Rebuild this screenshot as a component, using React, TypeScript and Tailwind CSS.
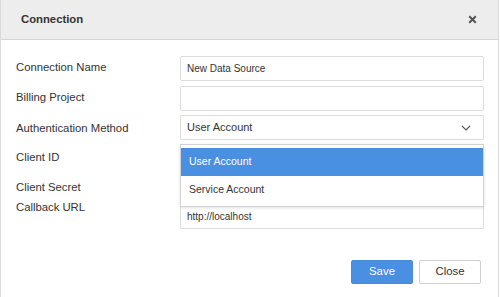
import React from "react";

function Field({ value }: { value?: string }) {
  return (
    <div className="h-[25px] w-full rounded-[2px] border border-[#dcdcdc] bg-white pl-[6px] flex items-center text-[10px] text-[#333]">
      {value}
    </div>
  );
}

export default function App() {
  const labels = [
    "Connection Name",
    "Billing Project",
    "Authentication Method",
    "Client ID",
    "Client Secret",
  ];
  return (
    <div className="w-[499px] h-[297px] overflow-hidden border-l border-r border-[#dadada] bg-white font-['Liberation_Sans',Arial,sans-serif] text-[#333]">
      <div className="h-[40px] bg-[#ededed] border-b border-[#d4d4d4] flex items-center justify-between pl-[20px] pr-[21px]">
        <span className="text-[11.3px] font-bold text-[#333]">Connection</span>
        <svg width="9" height="9" viewBox="0 0 9 9" className="mb-[1px]">
          <path d="M1.2 1.2 L7.8 7.8 M7.8 1.2 L1.2 7.8" stroke="#555" strokeWidth="2" strokeLinecap="butt" />
        </svg>
      </div>
      <div className="pl-[15px] pt-[16px] grid grid-cols-[164px_304px] gap-y-[4.5px]">
        <div className="text-[11.3px] leading-[14px] self-center -mt-[3px]">{labels[0]}</div>
        <Field value="New Data Source" />
        <div className="text-[11.3px] leading-[14px] self-center -mt-[2px]">{labels[1]}</div>
        <Field />
        <div className="text-[11.3px] leading-[14px] self-center">{labels[2]}</div>
        <div className="relative">
          <div className="h-[25px] w-full rounded-[2px] border border-[#dcdcdc] bg-white pl-[6px] pr-[12px] flex items-center justify-between text-[11px] text-[#333]">
            <span>User Account</span>
            <svg width="10" height="6" viewBox="0 0 10 6">
              <path d="M1 1 L5 5 L9 1" fill="none" stroke="#555" strokeWidth="1.1" />
            </svg>
          </div>
          <div className="absolute left-0 right-0 top-[29px] z-10 border border-[#d2d2d2] bg-white py-[3px] shadow-[0_1px_3px_rgba(0,0,0,0.12)] text-[10.5px]">
            <div className="h-[28px] bg-[#4a90e2] text-white flex items-center pl-[8px]">User Account</div>
            <div className="h-[27px] text-[#333] flex items-center pl-[8px]">Service Account</div>
          </div>
        </div>
        <div className="text-[11.3px] leading-[14px] self-center">{labels[3]}</div>
        <Field />
        <div className="text-[11.3px] leading-[14px] self-center">{labels[4]}</div>
        <Field />
        <div className="text-[11.3px] leading-[14px] self-start -mt-[4px]">Callback URL</div>
        <Field value="http://localhost" />
      </div>
      <div className="flex justify-end gap-[6px] pr-[17px] mt-[31px]">
        <button className="w-[62px] h-[24px] rounded-[2px] bg-[#4a90e2] border border-[#4a8adb] text-white text-[11.4px]">Save</button>
        <button className="w-[62px] h-[24px] rounded-[2px] bg-white border border-[#cfcfcf] text-[#333] text-[11.4px]">Close</button>
      </div>
    </div>
  );
}
